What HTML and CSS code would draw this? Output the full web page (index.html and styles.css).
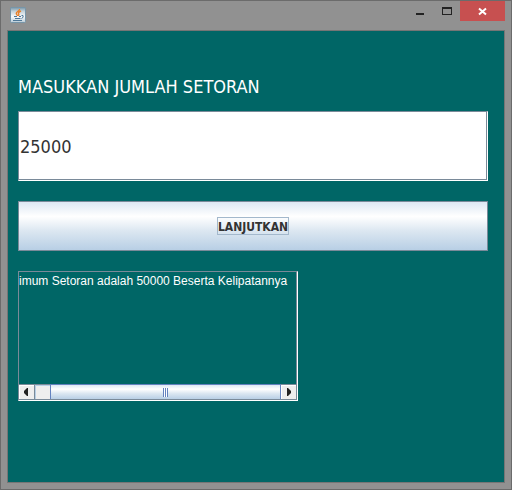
FILE: index.html
```html
<!DOCTYPE html>
<html lang="id">
<head>
<meta charset="utf-8">
<title>Setoran</title>
<link rel="stylesheet" href="styles.css">
</head>
<body>
<div class="window">
  <header class="titlebar">
    <svg class="app-icon" viewBox="0 0 16 16" aria-hidden="true">
      <defs>
        <linearGradient id="tile" x1="0" y1="0" x2="0" y2="1">
          <stop offset="0" stop-color="#7796a8"/>
          <stop offset="0.25" stop-color="#c3d2da"/>
          <stop offset="0.6" stop-color="#f6f8f9"/>
          <stop offset="1" stop-color="#b9cbd6"/>
        </linearGradient>
      </defs>
      <rect x="0.5" y="0.5" width="15" height="15" rx="1" fill="url(#tile)" stroke="#7795a8"/>
      <path d="M9.500 2C10 4 6 4.500 6.300 6.500C6.500 7.500 7.500 8 7.500 9M11 4C8.500 5 8 6 8.700 7C9.200 7.700 8.800 8.200 8.300 9" fill="none" stroke="#e8812b" stroke-width="1.400"/>
      <path d="M4 9.500H7M9 9.500H11M5 11.500H10.500M3 13.500H12M11.500 8.500H13Q14 10.500 11.500 11.500" fill="none" stroke="#4f7898" stroke-width="1"/>
    </svg>
    <div class="controls">
      <button class="control" type="button" aria-label="Minimize"><svg viewBox="0 0 27 20"><path d="M10 12H18V14H10Z" fill="#222"/></svg></button>
      <button class="control" type="button" aria-label="Maximize"><svg viewBox="0 0 27 20"><path d="M9 6H19V14H9ZM10 8V13H18V8Z" fill="#222" fill-rule="evenodd"/></svg></button>
      <button class="control close" type="button" aria-label="Close"><svg viewBox="0 0 45 20"><path d="M19 7.500L26 13.500M26 7.500L19 13.500" fill="none" stroke="#fff" stroke-width="2"/></svg></button>
    </div>
  </header>
  <main class="content">
    <label class="caption" for="amount">MASUKKAN JUMLAH SETORAN</label>
    <input class="amount etched" id="amount" type="text" value="25000">
    <button class="submit" type="button"><span class="submit-text">LANJUTKAN</span></button>
    <div class="message etched">
      <textarea class="message-text" aria-label="Pesan" wrap="off" readonly>imum Setoran adalah 50000 Beserta Kelipatannya</textarea>
      <div class="scrollbar">
        <button class="arrow" type="button" aria-label="Geser kiri"><svg viewBox="0 0 15 14"><path d="M9 3V11H8L5 8V6L8 3Z" fill="#222"/></svg></button>
        <div class="track"><div class="thumb"><span class="grip"></span></div></div>
        <button class="arrow" type="button" aria-label="Geser kanan"><svg viewBox="0 0 15 14"><path d="M6 3V11H7L10 8V6L7 3Z" fill="#222"/></svg></button>
      </div>
    </div>
  </main>
</div>
</body>
</html>
```
FILE: styles.css
```css
* {
  box-sizing: border-box;
}

body {
  margin: 0;
  font-family: "DejaVu Sans Condensed", "DejaVu Sans", sans-serif;
}

button,
input,
textarea {
  margin: 0;
  border-radius: 0;
  font-family: inherit;
}

svg {
  display: block;
}

.window {
  display: flex;
  flex-direction: column;
  min-height: 100vh;
  padding: 0 6px 6px;
  border: 1px solid #6b6b6b;
  background: #919191;
}

.titlebar {
  display: flex;
  justify-content: space-between;
  height: 29px;
}

.app-icon {
  width: 16px;
  height: 16px;
  margin: 6px 0 0 3px;
}

.controls {
  display: flex;
  height: 20px;
}

.control {
  width: 27px;
  height: 20px;
  padding: 0;
  border: 0;
  background: transparent;
}

.control svg {
  width: 100%;
  height: 100%;
}

.close {
  width: 45px;
  background: #c75050;
}

.content {
  display: flex;
  flex: 1;
  flex-direction: column;
  align-items: stretch;
  gap: 20px;
  padding: 44px 16px 20px 10px;
  border: 1px solid #757575;
  background: #006666;
}

.caption {
  height: 24px;
  margin-bottom: -8px;
  color: #fff;
  font-size: 18px;
  line-height: 24px;
  white-space: nowrap;
}

.etched {
  border: 1px solid;
  border-color: #7a8a99 #fff #fff #7a8a99;
}

.amount {
  width: 100%;
  height: 70px;
  padding: 0 1px;
  outline: 0;
  background: #fff;
  box-shadow: inset -1px -1px #7a8a99;
  color: #333;
  font-size: 18px;
}

.submit {
  height: 50px;
  padding: 0;
  border: 1px solid #7a8a99;
  background: linear-gradient(#dde8f3, #fff 30%, #dce7f1 60%, #b8cfe5);
  color: #333;
  font-size: 12px;
  font-weight: bold;
}

.submit-text {
  display: inline-block;
  height: 18px;
  border: 1px solid #a3b8cc;
  line-height: 18px;
}

.message {
  display: flex;
  flex-direction: column;
  width: 280px;
  max-width: 100%;
  height: 130px;
  padding: 0 1px 1px 0;
  box-shadow: inset -1px -1px #7a8a99;
}

.message-text {
  flex: 1;
  width: 100%;
  min-height: 0;
  padding: 1px 0;
  border: 0;
  outline: 0;
  overflow: hidden;
  resize: none;
  background: #006666;
  color: #fff;
  font-family: "Liberation Sans", Arial, sans-serif;
  font-size: 12px;
  line-height: 16px;
}

.scrollbar {
  display: flex;
  height: 15px;
  border-top: 1px solid #7a8a99;
  background: #eee;
}

.arrow {
  width: 16px;
  padding: 0;
  border: 0;
  border-right: 1px solid #7a8a99;
  background: #eee;
  box-shadow: inset 1px 1px #fff;
}

.arrow svg {
  width: 15px;
  height: 14px;
}

.arrow:last-child {
  width: 15px;
  border-right: 0;
}

.track {
  display: flex;
  flex: 1;
  justify-content: flex-end;
  box-shadow: inset 1px 1px #b8cfe5;
}

.thumb {
  display: flex;
  align-items: center;
  justify-content: center;
  width: 94%;
  margin-top: -1px;
  border: 1px solid #6382bf;
  border-bottom: 0;
  background: linear-gradient(#dde8f3, #fff 30%, #dce7f1 60%, #b8cfe5);
}

.grip {
  width: 5px;
  height: 9px;
  background: repeating-linear-gradient(90deg, #6382bf 0 1px, #fff 1px 2px);
}
```
